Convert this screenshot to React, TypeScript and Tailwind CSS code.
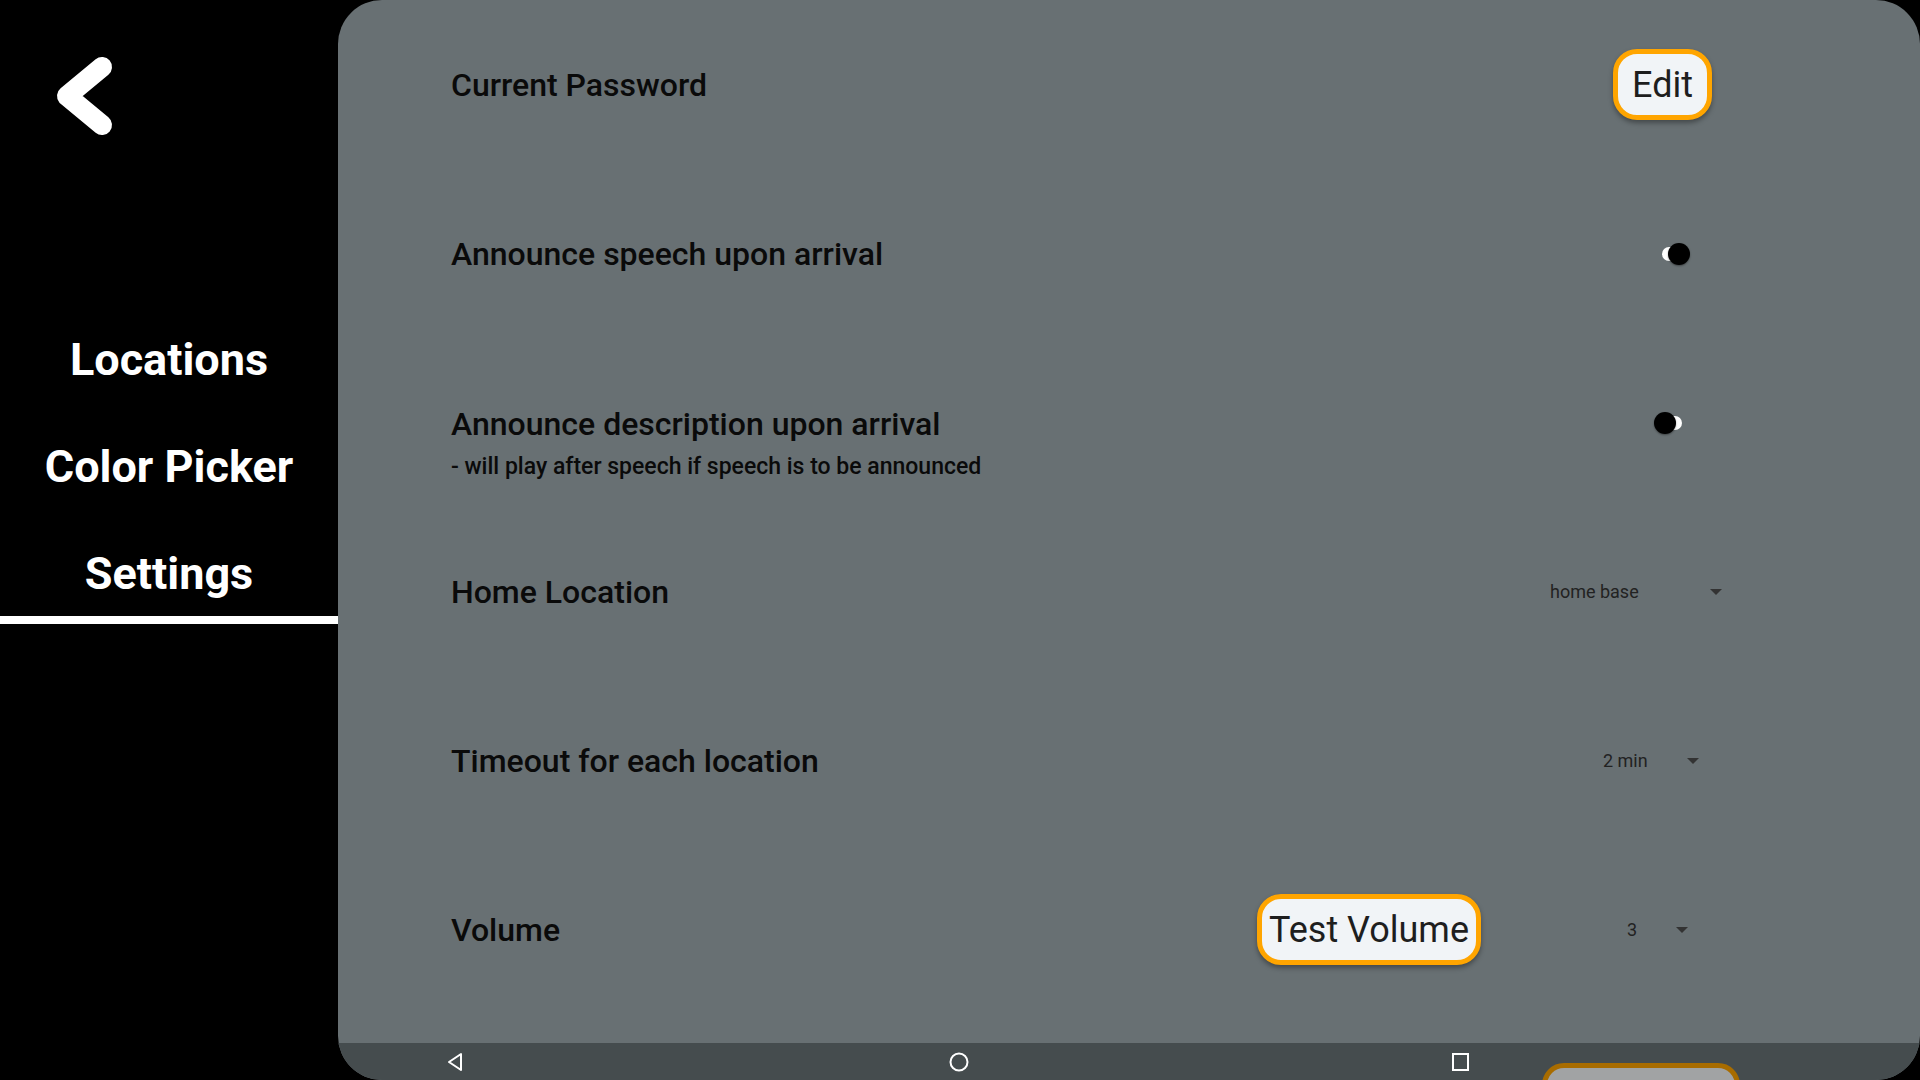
import React from "react";

const font = { fontFamily: "Roboto, 'Noto Sans', sans-serif" };

function Toggle({ on }: { on: boolean }) {
  return (
    <div className="relative w-[31px] h-[22px]">
      <div className="absolute left-[3px] top-[4px] w-[25px] h-[14px] rounded-full bg-white" />
      <div
        className={
          "absolute top-0 w-[22px] h-[22px] rounded-full bg-black shadow-[0_1px_2px_rgba(0,0,0,0.4)] " +
          (on ? "left-[9px]" : "left-0")
        }
      />
    </div>
  );
}

function Arrow() {
  return (
    <svg width="12" height="6" viewBox="0 0 12 6">
      <polygon points="0,0 12,0 6,6" fill="#333" />
    </svg>
  );
}

function OrangeButton({ label, w }: { label: string; w: string }) {
  return (
    <div
      className={
        "h-[71px] rounded-[24px] border-[5px] border-[#ffa500] bg-[#f1f4f7] flex items-center justify-center text-[36px] text-[#1e1e1e] shadow-[0_3px_5px_rgba(0,0,0,0.35)] " +
        w
      }
    >
      {label}
    </div>
  );
}

export default function App() {
  return (
    <div className="w-[1920px] h-[1080px] bg-black flex overflow-hidden relative" style={font}>
      {/* Sidebar */}
      <div className="w-[338px] h-full flex flex-col">
        <div className="h-[190px] pt-[46px] pl-[46px]">
          <svg width="80" height="100" viewBox="46 46 80 100">
            <polyline
              points="102,67 67,96 102,125"
              fill="none"
              stroke="white"
              strokeWidth="20"
              strokeLinecap="round"
              strokeLinejoin="round"
            />
          </svg>
        </div>
        <div className="flex flex-col items-center text-white font-bold text-[45px] leading-none">
          <div className="h-[107px] flex items-center mt-[116px]">Locations</div>
          <div className="h-[107px] flex items-center">Color Picker</div>
          <div className="h-[107px] flex items-center">Settings</div>
        </div>
        <div className="h-[8px] bg-white mt-[-11px]" />
      </div>

      {/* Main panel */}
      <div className="flex-1 h-full bg-[#687073] rounded-[44px] overflow-hidden flex flex-col relative">
        <div className="flex-1 text-[#0a0a0a]">
          {/* Row 1 */}
          <div className="h-[169px] flex items-center pl-[113px]">
            <div className="flex-1 text-[32px] font-medium">Current Password</div>
            <div className="mr-[208px]">
              <OrangeButton label="Edit" w="w-[99px]" />
            </div>
          </div>
          {/* Row 2 */}
          <div className="h-[169px] flex items-center pl-[113px]">
            <div className="flex-1 text-[32px] font-medium">Announce speech upon arrival</div>
            <div className="mr-[230px]">
              <Toggle on={true} />
            </div>
          </div>
          {/* Row 3 */}
          <div className="h-[169px] flex items-center pl-[113px]">
            <div className="flex-1 flex flex-col pt-[40px]">
              <div className="text-[32px] font-medium leading-[36px]">Announce description upon arrival</div>
              <div className="text-[23px] font-medium leading-[26px] mt-[12px]">
                - will play after speech if speech is to be announced
              </div>
            </div>
            <div className="mr-[235px]">
              <Toggle on={false} />
            </div>
          </div>
          {/* Row 4 */}
          <div className="h-[169px] flex items-center pl-[113px]">
            <div className="flex-1 text-[32px] font-medium">Home Location</div>
            <div className="mr-[198px] w-[172px] flex items-center justify-between text-[18px] text-[#222]">
              <span>home base</span>
              <Arrow />
            </div>
          </div>
          {/* Row 5 */}
          <div className="h-[169px] flex items-center pl-[113px]">
            <div className="flex-1 text-[32px] font-medium">Timeout for each location</div>
            <div className="mr-[221px] w-[96px] flex items-center justify-between text-[18px] text-[#222]">
              <span>2 min</span>
              <Arrow />
            </div>
          </div>
          {/* Row 6 */}
          <div className="h-[169px] flex items-center pl-[113px]">
            <div className="flex-1 text-[32px] font-medium">Volume</div>
            <OrangeButton label="Test Volume" w="w-[224px]" />
            <div className="ml-[146px] mr-[232px] w-[61px] flex items-center justify-between text-[18px] text-[#222]">
              <span>3</span>
              <Arrow />
            </div>
          </div>
        </div>
        {/* Nav bar */}
        <div className="h-[37px] bg-[#454c4e] flex items-center relative">
          <svg className="absolute left-[106px] top-[8px]" width="22" height="22" viewBox="0 0 22 22">
            <polygon points="17,3 17,19 5,11" fill="none" stroke="white" strokeWidth="2" strokeLinejoin="round" />
          </svg>
          <svg className="absolute left-[610px] top-[8px]" width="22" height="22" viewBox="0 0 22 22">
            <circle cx="11" cy="11" r="8.5" fill="none" stroke="white" strokeWidth="2" />
          </svg>
          <svg className="absolute left-[1113px] top-[9px]" width="20" height="20" viewBox="0 0 20 20">
            <rect x="2" y="2" width="15" height="16" fill="none" stroke="white" strokeWidth="2" />
          </svg>
          <div className="absolute left-[1204px] top-[20px] w-[198px] h-[40px] rounded-t-[22px] border-[5px] border-[#a86c00] bg-[#a1a3a4]" />
        </div>
      </div>
    </div>
  );
}
